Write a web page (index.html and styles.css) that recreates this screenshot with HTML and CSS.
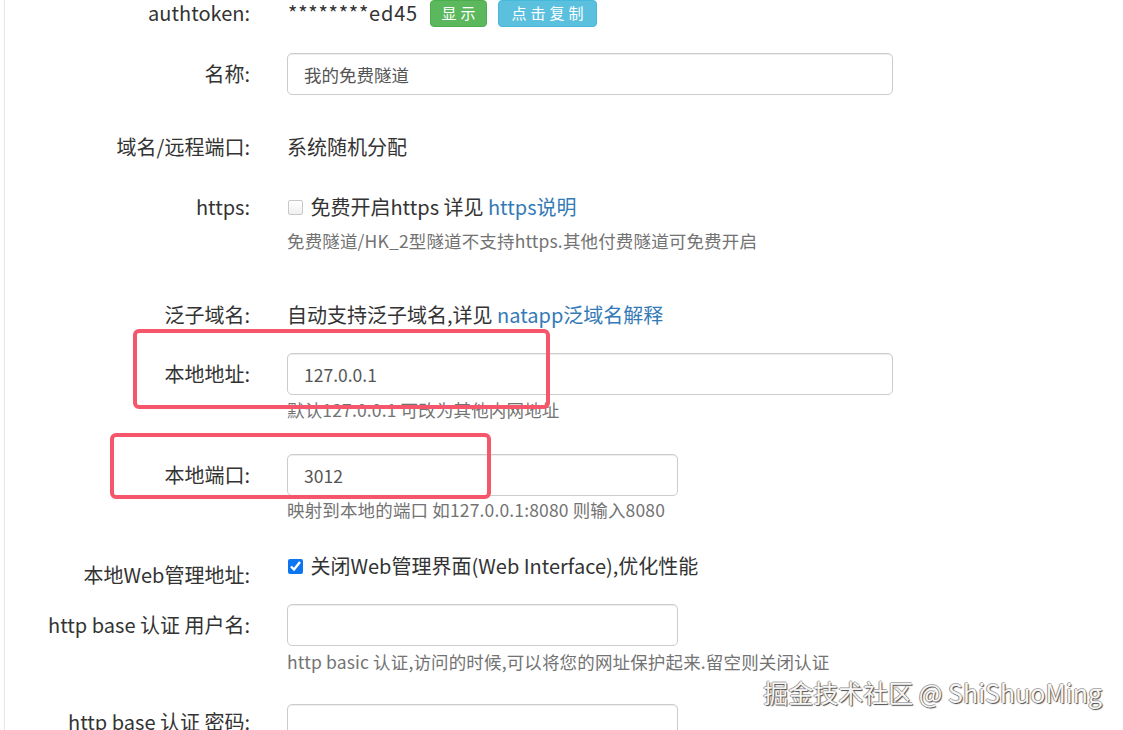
FILE: index.html
```html
<!DOCTYPE html>
<html lang="zh-CN">
<head>
<meta charset="utf-8">
<title>隧道配置</title>
<link rel="stylesheet" href="styles.css">
</head>
<body>
<div class="page">
  <form class="tunnel-form">
    <div class="row row-auth">
      <label class="row-label">authtoken:</label>
      <div class="row-ctl inline">
        <span class="token">********ed45</span>
        <button type="button" class="btn btn-success">显示</button>
        <button type="button" class="btn btn-info">点击复制</button>
      </div>
    </div>

    <div class="row row-name">
      <label class="row-label">名称:</label>
      <div class="row-ctl"><input class="field field-wide" type="text" value="我的免费隧道"></div>
    </div>

    <div class="row row-text row-domain">
      <label class="row-label">域名/远程端口:</label>
      <div class="row-ctl">系统随机分配</div>
    </div>

    <div class="row row-text row-https">
      <label class="row-label">https:</label>
      <div class="row-ctl">
        <div class="check-line"><input type="checkbox" class="check"> 免费开启https 详见 <a href="#" class="link">https说明</a></div>
        <p class="help help-https">免费隧道/HK_2型隧道不支持https.其他付费隧道可免费开启</p>
      </div>
    </div>

    <div class="row row-text row-wild">
      <label class="row-label">泛子域名:</label>
      <div class="row-ctl">自动支持泛子域名,详见 <a href="#" class="link">natapp泛域名解释</a></div>
    </div>

    <div class="row row-addr">
      <label class="row-label">本地地址:</label>
      <div class="row-ctl">
        <input class="field field-wide" type="text" value="127.0.0.1">
        <p class="help help-addr">默认127.0.0.1 可改为其他内网地址</p>
      </div>
    </div>

    <div class="row row-port">
      <label class="row-label">本地端口:</label>
      <div class="row-ctl">
        <input class="field field-narrow" type="text" value="3012">
        <p class="help help-port">映射到本地的端口 如127.0.0.1:8080 则输入8080</p>
      </div>
    </div>

    <div class="row row-text row-web">
      <label class="row-label label-web">本地Web管理地址:</label>
      <div class="row-ctl">
        <div class="check-line"><input type="checkbox" class="check" checked> 关闭Web管理界面(Web Interface),优化性能</div>
      </div>
    </div>

    <div class="row row-user">
      <label class="row-label">http base 认证 用户名:</label>
      <div class="row-ctl">
        <input class="field field-narrow" type="text">
        <p class="help help-user">http basic 认证,访问的时候,可以将您的网址保护起来.留空则关闭认证</p>
      </div>
    </div>

    <div class="row row-pass">
      <label class="row-label label-pass">http base 认证 密码:</label>
      <div class="row-ctl">
        <input class="field field-narrow" type="password">
      </div>
    </div>
  </form>

  <!-- highlight frames around the local address and port fields -->
  <div class="mark mark-addr"></div>
  <div class="mark mark-port"></div>

  <div class="watermark">掘金技术社区 @ ShiShuoMing</div>
</div>
</body>
</html>
```

FILE: styles.css
```css
* {
  box-sizing: border-box;
}

html, body {
  margin: 0;
  padding: 0;
  background: #ffffff;
  overflow: hidden;
}

body {
  font-family: "Noto Sans CJK SC", "Noto Sans", sans-serif;
  color: #333333;
  font-size: 20px;
  width: 1123px;
  height: 730px;
}

.page {
  position: relative;
  margin-left: 4px;
  height: 730px;
  border-left: 1px solid #e6e6e6;
}

.tunnel-form {
  display: flex;
  flex-direction: column;
}

.row {
  display: grid;
  grid-template-columns: 245px 606px;
  column-gap: 37px;
  align-items: start;
}

.row-label {
  text-align: right;
  font-weight: 400;
  line-height: 42px;
  white-space: nowrap;
}

.row-ctl {
  line-height: 30px;
}

.row-text .row-label {
  line-height: 30px;
}

/* vertical rhythm of the rows */
.row-auth {
  margin-top: -1px;
}
.row-auth .row-label,
.row-auth .row-ctl {
  line-height: 28px;
}
.row-name { margin-top: 26px; }
.row-domain { margin-top: 37px; }
.row-https { margin-top: 30px; }
.row-wild { margin-top: 48px; }
.row-addr { margin-top: 23px; }
.row-port { margin-top: 33px; }
.row-web { margin-top: 30px; }
.row-user { margin-top: 23px; }
.row-pass { margin-top: 31px; }

.label-web {
  padding-top: 9px;
  margin-bottom: -9px;
}
.label-pass {
  margin-top: -3px;
}

.inline {
  display: flex;
  align-items: center;
}

.token {
  font-size: 20px;
  margin-left: 1px;
  letter-spacing: 0.8px;
}

.btn {
  font-family: inherit;
  font-size: 15px;
  line-height: 24px;
  height: 27px;
  padding: 0 0 0 4px;
  letter-spacing: 4px;
  white-space: nowrap;
  text-align: center;
  color: #ffffff;
  border-radius: 4px;
  border: 1px solid transparent;
  cursor: pointer;
}

.btn-success {
  margin-left: 12px;
  width: 57px;
  background: #5cb85c;
  border-color: #4cae4c;
}

.btn-info {
  margin-left: 11px;
  width: 99px;
  background: #5bc0de;
  border-color: #46b8da;
}

.field {
  display: block;
  height: 42px;
  padding: 0 16px;
  font-family: inherit;
  font-size: 17.5px;
  color: #555555;
  background: #ffffff;
  border: 1px solid #cccccc;
  border-radius: 5px;
  box-shadow: inset 0 1px 1px rgba(0, 0, 0, 0.075);
  outline: none;
}

.field-wide {
  width: 606px;
}

.field-narrow {
  width: 391px;
}

.help {
  margin: 0;
  font-size: 17.5px;
  line-height: 22px;
  color: #737373;
  white-space: nowrap;
  letter-spacing: 0.15px;
}

.help-https { margin-top: 8px; }
.help-addr { margin-top: 4px; }
.help-port { margin-top: 3px; }
.help-user { margin-top: 5px; }

.link {
  color: #337ab7;
  text-decoration: none;
}

.check-line {
  display: flex;
  align-items: center;
  white-space: pre;
  margin-left: 1px;
}

.check {
  width: 15px;
  height: 15px;
  margin: 0 3px 0 0;
  accent-color: #0b76f0;
}

.check:not(:checked) {
  appearance: none;
  border: 1px solid #c8c8c8;
  border-radius: 2px;
  background: linear-gradient(#ffffff, #f0f0f0);
}

/* annotation frames drawn on top of the form */
.mark {
  position: absolute;
  border: 4px solid #f5566a;
  border-radius: 6px;
}

.mark-addr {
  left: 128px;
  top: 329px;
  width: 417px;
  height: 80px;
}

.mark-port {
  left: 105px;
  top: 433px;
  width: 381px;
  height: 66px;
}

.watermark {
  position: absolute;
  right: 21px;
  top: 674px;
  font-size: 25px;
  line-height: 36px;
  color: #f6f6f6;
  white-space: nowrap;
  text-shadow: 1px 1px 1px #4a4a4a, -1px 0 0 #9a9a9a, 0 -1px 0 #b0b0b0;
}
```
